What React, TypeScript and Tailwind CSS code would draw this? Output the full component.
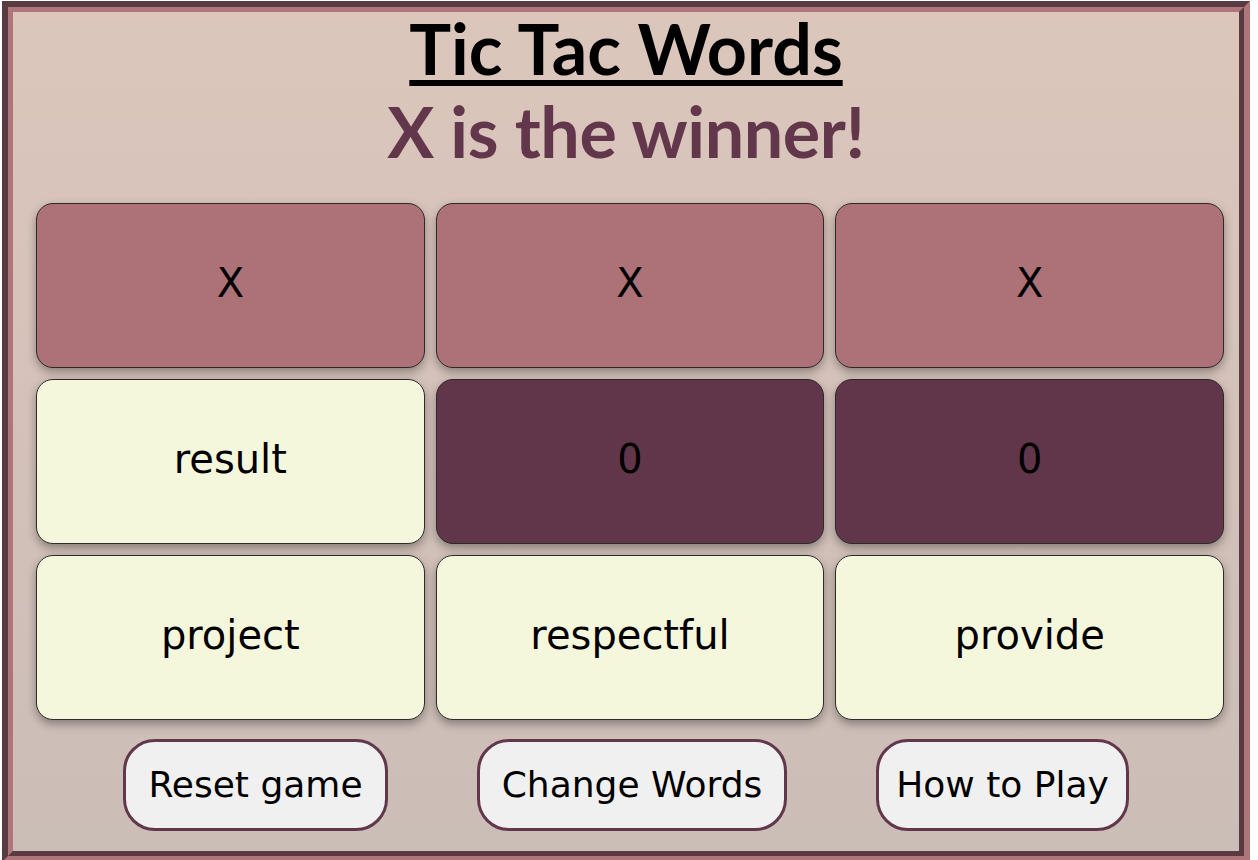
import React from "react";

type Cell = { label: string; kind: "x" | "o" | "word" };

const cells: Cell[] = [
  { label: "X", kind: "x" },
  { label: "X", kind: "x" },
  { label: "X", kind: "x" },
  { label: "result", kind: "word" },
  { label: "0", kind: "o" },
  { label: "0", kind: "o" },
  { label: "project", kind: "word" },
  { label: "respectful", kind: "word" },
  { label: "provide", kind: "word" },
];

const cellBg: Record<Cell["kind"], string> = {
  x: "bg-[#ac7277]",
  o: "bg-[#62364a]",
  word: "bg-[#f5f7dc]",
};

export default function App() {
  return (
    <div className="min-h-screen bg-white">
      <div className="ml-[2px] mt-[1px] w-[1248px] border-[6px] border-t-[#5a3a41] border-l-[#5a3a41] border-r-[#ae767b] border-b-[#ae767b]">
        <div className="h-[839px] border-[5px] border-t-[#ae767b] border-l-[#ae767b] border-r-[#5a3a41] border-b-[#5a3a41] bg-linear-to-b from-[#dcc6bc] to-[#cbbdb7] box-content">
          <h1 className="mt-[1px] text-center text-[70px] leading-[70px] font-bold text-black font-['Lato',sans-serif]">
            <span className="underline decoration-[6px] underline-offset-[5px]">Tic Tac Words</span>
          </h1>
          <h2 className="mt-[13px] text-center text-[70px] leading-[70px] font-bold tracking-[-0.4px] text-[#63374b] font-['Lato',sans-serif]">
            X is the winner!
          </h2>
          <div className="mt-[37px] grid grid-cols-3 gap-[11px] pl-[23px] pr-[15px]">
            {cells.map((c, i) => (
              <div
                key={i}
                className={`flex h-[165px] items-center justify-center rounded-[17px] border border-[#2e2a2a] pb-[6px] ${cellBg[c.kind]} shadow-[0_4px_10px_rgba(0,0,0,0.35)] text-[40px] text-black font-['DejaVu_Sans',sans-serif]`}
              >
                {c.label}
              </div>
            ))}
          </div>
          <div className="mt-[19px] flex justify-evenly px-[21px]">
            <button className="h-[92px] w-[265px] rounded-[32px] border-[3px] border-[#63374b] bg-[#f0f0f0] text-[36px] text-black font-['DejaVu_Sans',sans-serif]">
              Reset game
            </button>
            <button className="h-[92px] w-[310px] rounded-[32px] border-[3px] border-[#63374b] bg-[#f0f0f0] text-[36px] text-black font-['DejaVu_Sans',sans-serif]">
              Change Words
            </button>
            <button className="h-[92px] w-[253px] rounded-[32px] border-[3px] border-[#63374b] bg-[#f0f0f0] text-[36px] text-black font-['DejaVu_Sans',sans-serif]">
              How to Play
            </button>
          </div>
        </div>
      </div>
    </div>
  );
}
